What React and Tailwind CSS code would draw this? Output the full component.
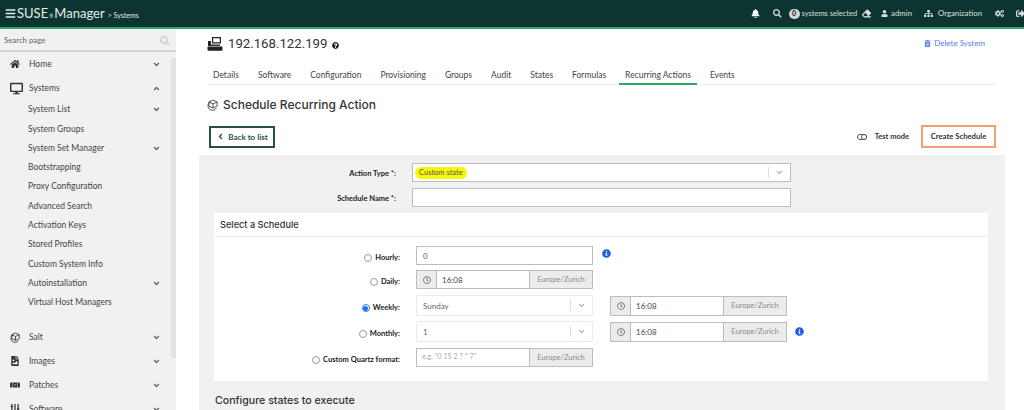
import React from "react";
import {
  FaBell, FaSearch, FaEraser, FaUser, FaSitemap, FaCogs, FaSignOutAlt, FaHome, FaDesktop,
  FaAngleDown, FaAngleUp, FaAngleLeft, FaTrashAlt, FaQuestionCircle, FaInfoCircle, FaRegClock,
  FaFileImage, FaBandAid, FaSlidersH, FaBars,
} from "react-icons/fa";

const lato = "font-['Lato','Liberation_Sans',sans-serif]";
const heading = "font-['Inter','Open_Sans',sans-serif]";

function SaltIcon({ className }) {
  return (
    <svg viewBox="0 0 16 16" className={className} fill="none" stroke="currentColor" strokeWidth="1.2">
      <path d="M5 3.5 A6 6 0 1 0 12.5 12" />
      <path d="M8 1.5l5.5 2.5v5.5L8 12l-5.5-2.5V4z" />
      <path d="M2.5 4L8 6.5 13.5 4M8 6.5V12" />
    </svg>
  );
}

function SystemIcon({ className }) {
  return (
    <svg viewBox="0 0 16 14" className={className} fill="currentColor">
      <path d="M5 0h9v6.5H5zM6.2 1.2v4.1h6.6V1.2z" fillRule="evenodd" />
      <path d="M3 7.5h10v1.4H3z" />
      <rect x="0.5" y="9.6" width="15" height="4.2" rx="1" />
      <path d="M1 4h3v5H1z" />
    </svg>
  );
}

const MainRow = ({ icon, label }) => (
  <div className="flex items-center h-6 shrink-0 pl-[10px] pr-[10px] text-[8.5px] text-[#444]">
    <span className="w-[19px] flex items-center text-[#333] shrink-0">{icon}</span>
    <span className="flex-1">{label}</span>
    <FaAngleDown className="text-[9px] text-[#666]" />
  </div>
);

const SubRow = ({ label, chevron }) => (
  <div className="flex items-center h-[19.3px] pl-[28px] pr-[10px] text-[8.5px] text-[#444]">
    <span className="flex-1">{label}</span>
    {chevron && <FaAngleDown className="text-[9px] text-[#666]" />}
  </div>
);

function Sidebar() {
  const subs = ["System List", "System Groups", "System Set Manager", "Bootstrapping", "Proxy Configuration", "Advanced Search", "Activation Keys", "Stored Profiles", "Custom System Info", "Autoinstallation", "Virtual Host Managers"];
  const chev = ["System List", "System Set Manager", "Autoinstallation"];
  return (
    <aside className="w-[176px] shrink-0 bg-[#f1f1f1] flex flex-col h-[381px] overflow-hidden">
      <div className="h-[23px] shrink-0 flex items-center justify-between pl-[4px] pr-[6px] pt-[2px] border-b-2 border-[#d4d4d4] text-[7.8px] text-[#666]">
        <span>Search page</span>
        <FaSearch className="text-[10px] text-[#d0d0d0]" />
      </div>
      <div className="flex flex-1 min-h-0">
        <div className="w-[171px] flex flex-col shrink-0">
          <MainRow icon={<FaHome className="text-[10px]" />} label="Home" />
          <div className="flex items-center h-6 shrink-0 pl-[10px] pr-[10px] text-[8.5px] text-[#444]">
            <span className="w-[19px] shrink-0"><FaDesktop className="text-[13px] text-[#333]" /></span>
            <span className="flex-1">Systems</span>
            <FaAngleUp className="text-[9px] text-[#666]" />
          </div>
          <div className="shrink-0">
            {subs.map((s) => <SubRow key={s} label={s} chevron={chev.includes(s)} />)}
          </div>
          <div className="h-[13px] shrink-0" />
          <MainRow icon={<SaltIcon className="w-[11px] h-[11px]" />} label="Salt" />
          <MainRow icon={<FaFileImage className="text-[10px]" />} label="Images" />
          <MainRow icon={<FaBandAid className="text-[10px]" />} label="Patches" />
          <MainRow icon={<FaSlidersH className="text-[10px] rotate-90" />} label="Software" />
        </div>
        <div className="w-[5px] h-[300px] mt-[6px] bg-[#e2e2e2] shrink-0" />
      </div>
    </aside>
  );
}

function Header() {
  return (
    <header className="h-[29px] shrink-0 bg-[#0d3530] border-b-2 border-[#30a46c] flex items-center text-white overflow-hidden">
      <div className="flex items-baseline pl-[5px] text-[#e4ecea]">
        <FaBars className="text-[11px] mr-[1px] self-center" />
        <span className="text-[13px] leading-none">SUSE</span>
        <span className="text-[5px] mx-[1px]">®</span>
        <span className="text-[13px] leading-none">Manager</span>
        <span className="text-[7px] ml-[3px]">&gt; Systems</span>
      </div>
      <div className="ml-auto flex items-center text-[7.8px] text-[#d8e0de] whitespace-nowrap -mr-[1px]">
        <FaBell className="text-[9px] text-white mr-[13px]" />
        <FaSearch className="text-[8.5px] mr-[7px]" />
        <span className="w-[11px] h-[10px] rounded-full bg-[#d4d4d4] text-[#222] text-[7px] font-bold flex items-center justify-center mr-[2px]">0</span>
        <span className="text-[7.5px]">systems selected</span>
        <FaEraser className="text-[9px] ml-[5px] mr-[10px]" />
        <FaUser className="text-[7px] mr-[3px]" />
        <span>admin</span>
        <FaSitemap className="text-[9px] ml-[12px] mr-[5px]" />
        <span>Organization</span>
        <FaCogs className="text-[9px] ml-[13px] mr-[12px]" />
        <FaSignOutAlt className="text-[9px]" />
      </div>
    </header>
  );
}

const tabs = ["Details", "Software", "Configuration", "Provisioning", "Groups", "Audit", "States", "Formulas", "Recurring Actions", "Events"];

const Tz = () => (
  <span className="w-[63px] h-full bg-[#ececec] border-l border-[#bdbdbd] flex items-center justify-center text-[7.5px] text-[#8a8a8a] shrink-0">Europe/Zurich</span>
);

const TimeGroup = ({ className }) => (
  <div className={`flex border border-[#bdbdbd] ${className}`}>
    <span className="w-[20px] bg-[#ececec] border-r border-[#bdbdbd] flex items-center justify-center text-[#666] shrink-0">
      <FaRegClock className="text-[8px]" />
    </span>
    <span className="flex-1 bg-white flex items-center pl-[5px] text-[8px] text-[#444]">16:08</span>
    <Tz />
  </div>
);

const Select = ({ value }) => (
  <div className="w-[177px] h-[21px] border border-[#ebebeb] rounded-[2px] bg-white flex items-center text-[8px] text-[#666]">
    <span className="flex-1 pl-[6px]">{value}</span>
    <span className="w-px h-[11px] bg-[#ddd]" />
    <FaAngleDown className="text-[9px] text-[#bbb] mx-[6px]" />
  </div>
);

const Label = ({ label, checked }) => (
  <label className="w-[186px] shrink-0 pt-[5px] flex justify-end items-center text-[7.5px] font-bold text-[#222]">
    <span className={`w-[8px] h-[8px] rounded-full border mr-[3px] flex items-center justify-center shrink-0 bg-white ${checked ? "border-[#2f80ed]" : "border-[#999]"}`}>
      {checked && <span className="w-[5px] h-[5px] rounded-full bg-[#1a73e8]" />}
    </span>
    {label}
  </label>
);

const Info = () => <FaInfoCircle className="text-[9px] text-[#1f5fe0]" />;

function FormPanel() {
  return (
    <section className="mt-[7px] ml-[10px] mr-[19px] flex-1 min-h-0 bg-[#f1f1f1] pt-[8px]">
      <div className="flex items-center h-[19px]">
        <span className="w-[197px] pt-[2px] text-right text-[7.5px] font-bold text-[#222] shrink-0">Action Type *:</span>
        <div className="ml-[16px] w-[379px] h-full border border-[#bdbdbd] bg-white flex items-center">
          <span className="ml-[2px] px-[4px] h-[12px] flex items-center rounded-full bg-[#f6f60a] text-[7.5px] text-[#555] whitespace-nowrap">Custom state</span>
          <span className="flex-1" />
          <span className="w-px h-[11px] bg-[#ddd]" />
          <FaAngleDown className="text-[9px] text-[#bbb] mx-[6px]" />
        </div>
      </div>
      <div className="flex items-center h-[19px] mt-[6px]">
        <span className="w-[197px] pt-[2px] text-right text-[7.5px] font-bold text-[#222] shrink-0">Schedule Name *:</span>
        <div className="ml-[16px] w-[379px] h-full border border-[#bdbdbd] bg-white" />
      </div>
      <div className="ml-[15px] mr-[17px] mt-[6px] bg-white h-[168px]">
        <div className={`h-[24px] pt-[1px] flex items-center px-[6px] text-[9.2px] font-medium text-[#333] border-b border-[#ececec] ${heading}`}>Select a Schedule</div>
        <div className="pt-[9px]">
          <div className="flex items-center h-[19px]">
            <Label label="Hourly:" />
            <div className="ml-[16px] w-[177px] h-full border border-[#bdbdbd] bg-white flex items-center pl-[6px] text-[8px] text-[#555]">0</div>
            <span className="ml-[9px] -mt-[4px] flex"><Info /></span>
          </div>
          <div className="flex items-center h-[19px] mt-[5px]">
            <Label label="Daily:" />
            <TimeGroup className="ml-[16px] w-[177px] h-full" />
          </div>
          <div className="flex items-center h-[21px] mt-[6px]">
            <Label label="Weekly:" checked />
            <div className="ml-[16px]"><Select value="Sunday" /></div>
            <TimeGroup className="ml-[17px] w-[177px] h-[20px]" />
          </div>
          <div className="flex items-center h-[21px] mt-[5px]">
            <Label label="Monthly:" />
            <div className="ml-[16px]"><Select value="1" /></div>
            <TimeGroup className="ml-[17px] w-[177px] h-[20px]" />
            <span className="ml-[8px] flex"><Info /></span>
          </div>
          <div className="flex items-center h-[19px] mt-[6px]">
            <Label label="Custom Quartz format:" />
            <div className="ml-[16px] w-[177px] h-full border border-[#bdbdbd] flex">
              <span className="flex-1 bg-white flex items-center pl-[5px] text-[7.2px] text-[#aaa]">e.g. "0 15 2 ? * 7"</span>
              <Tz />
            </div>
          </div>
        </div>
      </div>
      <div className={`pl-[16px] pt-[12px] text-[10.6px] font-medium text-[#333] ${heading}`}>Configure states to execute</div>
    </section>
  );
}

function Main() {
  return (
    <main className="flex-1 min-w-0 flex flex-col pl-[13px] h-[381px] overflow-hidden bg-white">
      <div className="h-[29px] flex items-center pt-[1px] shrink-0 text-[#222]">
        <SystemIcon className="w-[16px] h-[14px] text-[#222] ml-[18px] mr-[5px]" />
        <span className="text-[13.2px] font-['Roboto',sans-serif] text-[#333]">192.168.122.199</span>
        <FaQuestionCircle className="text-[7px] ml-[5px] mt-[2px]" />
        <span className="ml-auto mr-[39px] mb-[2px] flex items-center gap-[3px] text-[8px] text-[#5b78f5]">
          <FaTrashAlt className="text-[7px]" /> Delete System
        </span>
      </div>
      <nav className="h-[27px] shrink-0 flex items-end ml-[18px] mr-[28px] border-b border-[#eeeeee] text-[8.5px] text-[#444] gap-[7px]">
        {tabs.map((t) => (
          <span key={t} className={`px-[6px] pb-[1px] leading-[13px] -mb-px border-b-2 ${t === "Recurring Actions" ? "border-[#30a46c]" : "border-transparent"}`}>{t}</span>
        ))}
      </nav>
      <div className="flex items-center pt-[9px] h-[31px] ml-[18px] shrink-0">
        <SaltIcon className="w-[12px] h-[12px] text-[#444] mr-[4px]" />
        <span className={`text-[12px] font-medium text-[#333] ${heading}`}>Schedule Recurring Action</span>
      </div>
      <div className="flex items-center ml-[20px] mr-[28px] mt-[9px] h-[23px] shrink-0">
        <button className="w-[66px] h-[22px] border-2 border-[#24524b] flex items-center justify-center gap-[3px] text-[8px] font-bold text-[#24524b]">
          <FaAngleLeft className="text-[9px]" /> Back to list
        </button>
        <span className="ml-auto flex items-center text-[7.5px] font-bold text-[#333]">
          <span className="w-[10px] h-[6px] rounded-full border border-[#555] mr-[8px] relative">
            <span className="absolute left-[3px] top-[-1px] w-[6px] h-[6px] rounded-full border border-[#555] bg-white" />
          </span>
          Test mode
        </span>
        <button className="ml-[12px] w-[75px] h-[23px] border-2 border-[#f2a070] text-[7.7px] font-bold text-[#333]">Create Schedule</button>
      </div>
      <FormPanel />
    </main>
  );
}

export default function App() {
  return (
    <div className={`w-[1024px] h-[410px] overflow-hidden flex flex-col bg-white ${lato}`}>
      <Header />
      <div className="flex flex-1 min-h-0">
        <Sidebar />
        <Main />
      </div>
    </div>
  );
}
